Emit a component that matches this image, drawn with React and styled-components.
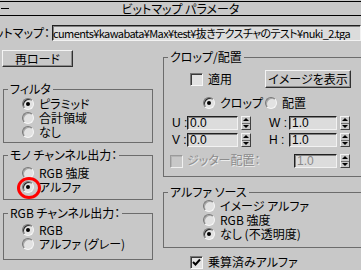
import * as React from "react";
import styled, { createGlobalStyle } from "styled-components";

const GlobalStyle = createGlobalStyle`
  body {
    margin: 0;
    background: #c8c8c8;
  }
`;

const Root = styled.div`
  width: 361px;
  height: 270px;
  overflow: hidden;
  background: #c8c8c8;
  color: #000;
  font-family: "Noto Sans CJK JP", "Liberation Sans", sans-serif;
  font-feature-settings: "palt";
  font-size: 12px;
  line-height: 12px;
`;

const TitleBar = styled.div`
  margin-top: 1px;
  height: 13px;
  border-top: 1px solid #000;
  border-bottom: 1px solid #000;
  display: grid;
  grid-template-columns: 20px 1fr 20px;
  align-items: center;
`;

const Minus = styled.span`
  width: 8px;
  height: 1px;
  background: #000;
  margin-left: 1px;
`;

const TitleText = styled.span`
  text-align: center;
`;

const PathRow = styled.div`
  margin-top: 9px;
  height: 16px;
  display: flex;
  align-items: center;
`;

const PathLabel = styled.div`
  width: 50px;
  flex-shrink: 0;
  overflow: hidden;
  white-space: nowrap;
  display: flex;
  justify-content: flex-end;
`;

const Field = styled.div`
  box-sizing: border-box;
  height: ${(p) => p.$h || 14}px;
  width: ${(p) => (p.$w ? `${p.$w}px` : "auto")};
  flex: ${(p) => (p.$grow ? 1 : "none")};
  margin-left: ${(p) => p.$ml || 0}px;
  background: #dcdcdc;
  border: 1px solid;
  border-color: #202020 #f2f2f2 #f2f2f2 #202020;
  box-shadow: inset 1px 1px 0 #808080;
  padding: 0 ${(p) => (p.$path ? 0 : 2)}px;
  display: flex;
  align-items: center;
  white-space: nowrap;
  overflow: hidden;
  color: ${(p) => (p.$disabled ? "#8a8a8a" : "#000")};
  font-family: ${(p) =>
    p.$path
      ? '"Noto Sans CJK JP", sans-serif'
      : '"Liberation Sans", "Noto Sans CJK JP", sans-serif'};
  font-size: ${(p) => (p.$path ? 11 : 12)}px;
  letter-spacing: ${(p) => (p.$path ? -0.6 : 0)}px;
`;

const Columns = styled.div`
  margin-top: 9px;
  display: flex;
`;

const LeftCol = styled.div`
  width: 153px;
  flex-shrink: 0;
  display: flex;
  flex-direction: column;
`;

const RightCol = styled.div`
  margin-left: 10px;
  width: 240px;
  flex-shrink: 0;
  display: flex;
  flex-direction: column;
`;

const Button = styled.div`
  box-sizing: border-box;
  width: ${(p) => p.$w}px;
  height: ${(p) => p.$h}px;
  margin-left: ${(p) => p.$ml || 0}px;
  border: 1px solid;
  border-color: #f4f4f4 #303030 #303030 #f4f4f4;
  box-shadow: inset -1px -1px 0 #8c8c8c;
  display: flex;
  align-items: center;
  justify-content: center;
  flex-shrink: 0;
  white-space: nowrap;
`;

const Group = styled.fieldset`
  box-sizing: border-box;
  margin: ${(p) => p.$mt}px 0 0 ${(p) => p.$ml}px;
  width: ${(p) => p.$w}px;
  min-width: 0;
  padding: 0;
  border: 1px solid #6c6c6c;
`;

const Legend = styled.legend`
  margin-left: 4px;
  padding: 0 2px;
  font-size: 12px;
  line-height: 12px;
  white-space: nowrap;
`;

const GroupBody = styled.div`
  padding: ${(p) => p.$pad};
  display: flex;
  flex-direction: column;
`;

const OptionRow = styled.label`
  height: ${(p) => p.$h || 14}px;
  width: ${(p) => (p.$w ? `${p.$w}px` : "auto")};
  display: flex;
  align-items: center;
  gap: 5px;
  white-space: nowrap;
  flex-shrink: 0;
`;

const RadioDot = styled.span`
  position: relative;
  box-sizing: border-box;
  width: 12px;
  height: 12px;
  flex-shrink: 0;
  border-radius: 50%;
  background: #e2e2e2;
  border: 1px solid;
  border-color: #767676 #f6f6f6 #f6f6f6 #767676;
  box-shadow: inset 1px 1px 0 ${(p) => (p.$checked ? "#2a2a2a" : "#a6a6a6")};

  &::after {
    content: "";
    display: ${(p) => (p.$checked ? "block" : "none")};
    position: absolute;
    left: 3px;
    top: 3px;
    width: 4px;
    height: 4px;
    border-radius: 50%;
    background: #000;
  }
`;

const Marker = styled.span`
  position: absolute;
  left: -6px;
  top: -5px;
  width: 18px;
  height: 16px;
  border: 3px solid #ff0000;
  border-radius: 50%;
`;

const CheckBox = styled.span`
  box-sizing: border-box;
  width: 13px;
  height: 13px;
  flex-shrink: 0;
  background: ${(p) => (p.$disabled ? "#c8c8c8" : "#e2e2e2")};
  border: 1px solid;
  border-color: ${(p) =>
    p.$disabled
      ? "#9a9a9a #f0f0f0 #f0f0f0 #9a9a9a"
      : "#767676 #f6f6f6 #f6f6f6 #767676"};
  box-shadow: inset 1px 1px 0 ${(p) => (p.$disabled ? "#b4b4b4" : "#3a3a3a")};
  display: flex;
  align-items: center;
  justify-content: center;
`;

const Row = styled.div`
  display: flex;
  align-items: center;
  height: ${(p) => p.$h}px;
  margin-top: ${(p) => p.$mt || 0}px;
  margin-left: ${(p) => p.$ml || 0}px;
`;

const SpinLabel = styled.span`
  width: ${(p) => p.$w}px;
  margin-left: ${(p) => p.$ml || 0}px;
  flex-shrink: 0;
  white-space: nowrap;
  font-family: "Liberation Sans", "Noto Sans CJK JP", sans-serif;
  color: ${(p) => (p.$disabled ? "#8c8c8c" : "#000")};
  text-shadow: ${(p) => (p.$disabled ? "1px 1px 0 #ececec" : "none")};
`;

const Spinner = styled.div`
  box-sizing: border-box;
  width: 10px;
  height: 14px;
  margin-left: 3px;
  flex-shrink: 0;
  border: 1px solid;
  border-color: #f4f4f4 #404040 #404040 #f4f4f4;
  display: flex;
  flex-direction: column;
`;

const SpinHalf = styled.span`
  flex: 1;
  display: flex;
  align-items: center;
  justify-content: center;
  border-top: ${(p) => (p.$down ? "1px solid #707070" : "none")};

  &::after {
    content: "";
    width: 0;
    height: 0;
    border-left: 3px solid transparent;
    border-right: 3px solid transparent;
    ${(p) =>
      p.$down ? "border-top: 3px solid #000;" : "border-bottom: 3px solid #000;"}
  }
`;

const Check = () => (
  <svg width="9" height="9" viewBox="0 0 9 9">
    <path d="M1 4 L3.5 6.5 L8 1.5" stroke="#000" strokeWidth="2" fill="none" />
  </svg>
);

const Radio = ({ checked, label, marked }) => (
  <OptionRow>
    <RadioDot $checked={checked}>{marked && <Marker />}</RadioDot>
    {label}
  </OptionRow>
);

const SpinField = ({ label, value, labelW, labelMl, fieldW, disabled }) => (
  <>
    {label !== undefined && (
      <SpinLabel $w={labelW} $ml={labelMl} $disabled={disabled}>
        {label}
      </SpinLabel>
    )}
    <Field $w={fieldW} $disabled={disabled}>
      {value}
    </Field>
    <Spinner>
      <SpinHalf />
      <SpinHalf $down />
    </Spinner>
  </>
);

export default function App() {
  return (
    <Root>
      <GlobalStyle />
      <TitleBar>
        <Minus />
        <TitleText>ビットマップ パラメータ</TitleText>
      </TitleBar>
      <PathRow>
        <PathLabel>ビットマップ：</PathLabel>
        <Field $h={16} $grow $ml={2} $path>
          cuments¥kawabata¥Max¥test¥抜きテクスチャのテスト¥nuki_2.tga
        </Field>
      </PathRow>
      <Columns>
        <LeftCol>
          <Button $w={71} $h={17} $ml={2}>
            再ロード
          </Button>
          <Group $mt={16} $ml={3} $w={150}>
            <Legend>フィルタ</Legend>
            <GroupBody $pad="2px 0 3px 18px">
              <Radio checked label="ピラミッド" />
              <Radio label="合計領域" />
              <Radio label="なし" />
            </GroupBody>
          </Group>
          <Group $mt={6} $ml={3} $w={150}>
            <Legend>モノ チャンネル出力：</Legend>
            <GroupBody $pad="5px 0 5px 18px">
              <Radio label="RGB 強度" />
              <Radio checked marked label="アルファ" />
            </GroupBody>
          </Group>
          <Group $mt={7} $ml={3} $w={150}>
            <Legend>RGB チャンネル出力：</Legend>
            <GroupBody $pad="4px 0 8px 18px">
              <Radio checked label="RGB" />
              <Radio label="アルファ (グレー)" />
            </GroupBody>
          </Group>
        </LeftCol>
        <RightCol>
          <Group $mt={1} $ml={0} $w={240}>
            <Legend>クロップ/配置</Legend>
            <GroupBody $pad="7px 0 8px 6px">
              <Row $h={18} $ml={20}>
                <OptionRow $w={75} $h={18}>
                  <CheckBox />
                  適用
                </OptionRow>
                <Button $w={86} $h={18}>
                  イメージを表示
                </Button>
              </Row>
              <Row $h={14} $mt={8} $ml={33}>
                <OptionRow $w={62}>
                  <RadioDot $checked />
                  クロップ
                </OptionRow>
                <Radio label="配置" />
              </Row>
              <Row $h={14} $mt={6}>
                <SpinField label="U :" labelW={15} labelMl={2} value="0.0" fieldW={51} />
                <SpinField label="W :" labelW={20} labelMl={18} value="1.0" fieldW={48} />
              </Row>
              <Row $h={14} $mt={3}>
                <SpinField label="V :" labelW={15} labelMl={2} value="0.0" fieldW={51} />
                <SpinField label="H :" labelW={20} labelMl={18} value="1.0" fieldW={48} />
              </Row>
              <Row $h={14} $mt={7}>
                <CheckBox $disabled />
                <SpinLabel $w={107} $ml={4} $disabled>
                  ジッター配置：
                </SpinLabel>
                <SpinField value="1.0" fieldW={43} disabled />
              </Row>
            </GroupBody>
          </Group>
          <Group $mt={9} $ml={0} $w={240}>
            <Legend>アルファ ソース</Legend>
            <GroupBody $pad="1px 0 6px 39px">
              <Radio label="イメージ アルファ" />
              <Radio label="RGB 強度" />
              <Radio checked label="なし (不透明度)" />
            </GroupBody>
          </Group>
          <Row $h={14} $mt={7} $ml={27}>
            <OptionRow $h={14}>
              <CheckBox>
                <Check />
              </CheckBox>
              乗算済みアルファ
            </OptionRow>
          </Row>
        </RightCol>
      </Columns>
    </Root>
  );
}
